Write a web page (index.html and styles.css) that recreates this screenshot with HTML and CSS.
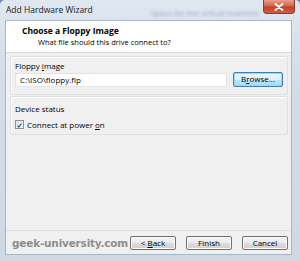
FILE: index.html
```html
<!DOCTYPE html>
<html>
<head>
<meta charset="utf-8">
<link rel="stylesheet" href="styles.css">
</head>
<body>
<div class="window">
  <div class="titlebar">
    <span class="title">Add Hardware Wizard</span>
    <span class="behind">Specs for the virtual machine</span>
    <span class="close"><svg width="10" height="8" viewBox="0 0 10 8"><path d="M1.5 1 L8.5 7 M8.5 1 L1.5 7" stroke="#fff" stroke-width="1.8" stroke-linecap="round"/></svg></span>
  </div>
  <div class="client">
    <div class="header">
      <div class="h-title">Choose a Floppy Image</div>
      <div class="h-sub">What file should this drive connect to?</div>
    </div>
    <div class="body">
      <div class="group">
        <div class="label">Floppy <u>i</u>mage</div>
        <div class="row">
          <div class="textbox">C:\ISO\floppy.flp</div>
          <div class="btn btn-focus">B<u>r</u>owse...</div>
        </div>
      </div>
      <div class="group group2">
        <div class="label">Device status</div>
        <div class="check-row">
          <span class="checkbox"><svg width="9" height="9" viewBox="0 0 9 9"><path d="M2 4.6 L3.8 6.6 L7 2" fill="none" stroke="#2a4a8a" stroke-width="1.3"/></svg></span>
          <span>Connect at power <u>o</u>n</span>
        </div>
      </div>
    </div>
    <div class="footer">
      <span class="watermark">geek-university.com</span>
      <div class="buttons">
        <div class="btn">&lt; <u>B</u>ack</div>
        <div class="btn">Finish</div>
        <div class="btn">Cancel</div>
      </div>
    </div>
  </div>
</div>
</body>
</html>
```
FILE: styles.css
```css
html, body {
  margin: 0;
  padding: 0;
  background: #6f8fb5;
}
.window {
  width: 300px;
  height: 261px;
  box-sizing: border-box;
  display: flex;
  flex-direction: column;
  background: linear-gradient(180deg, #dfe7f0 0%, #d3dde8 30%, #cfd9e4 100%);
  border-radius: 5px 5px 0 0;
  font-family: "Open Sans", "Noto Sans", sans-serif;
  font-size: 8px;
  color: #000;
  overflow: hidden;
}
.titlebar {
  height: 20px;
  flex: none;
  display: flex;
  align-items: flex-start;
  padding-left: 6px;
}
.title {
  font-size: 8.5px;
  line-height: 20px;
  color: #1a1a1a;
}
.behind {
  margin-left: auto;
  margin-right: 4px;
  margin-top: 7px;
  font-size: 8px;
  color: rgba(70, 110, 160, 0.5);
  filter: blur(1.4px);
  white-space: nowrap;
}
.close {
  width: 32px;
  height: 14px;
  margin-right: 5px;
  box-sizing: border-box;
  border: 1px solid #8a3a2a;
  border-top: none;
  border-radius: 0 0 4px 4px;
  background: linear-gradient(180deg, #e8a08e 0%, #d4644a 45%, #bf4329 55%, #cf5e44 100%);
  display: flex;
  align-items: center;
  justify-content: center;
}
.client {
  flex: 1;
  margin: 0 8px 6px 5px;
  border: 1px solid #a9b6c4;
  background: #f0f0f0;
  display: flex;
  flex-direction: column;
}
.header {
  height: 32px;
  flex: none;
  background: #fff;
  border-bottom: 1px solid #d8d8d8;
  box-sizing: border-box;
  padding: 4px 0 0 16px;
}
.h-title {
  font-weight: bold;
  font-size: 8.5px;
  line-height: 12px;
}
.h-sub {
  padding-left: 16px;
  font-size: 7.5px;
  line-height: 11px;
}
.body {
  padding: 3px 3px 0 4px;
  display: flex;
  flex-direction: column;
  gap: 1px;
  flex: 1;
}
.group {
  border: 1px solid #e0e0e0;
  box-shadow: inset 1px 1px 0 #fff;
  border-radius: 2px;
  padding: 3px 4px 7px 4px;
}
.label {
  line-height: 12px;
}
.row {
  display: flex;
  gap: 6px;
  align-items: center;
}
.textbox {
  flex: 1;
  height: 14px;
  box-sizing: border-box;
  background: #fff;
  border: 1px solid #e2e3ea;
  padding-left: 4px;
  line-height: 12px;
}
.btn {
  height: 14px;
  box-sizing: border-box;
  border: 1px solid #707070;
  border-radius: 2px;
  background: linear-gradient(180deg, #f3f3f3 0%, #ebebeb 50%, #dddddd 50%, #cfcfcf 100%);
  text-align: center;
  line-height: 12px;
  box-shadow: inset 0 0 0 1px #fcfcfc;
}
.btn-focus {
  width: 50px;
  height: 15px;
  border-color: #3c7fb1;
  background: linear-gradient(180deg, #eaf6fd 0%, #d9f0fc 50%, #bee6fd 50%, #a7d9f5 100%);
  box-shadow: inset 0 0 0 1px #9ed7f0;
}
.group2 {
  padding-top: 6px;
  padding-bottom: 4px;
}
.check-row {
  display: flex;
  align-items: center;
  gap: 3px;
  margin-top: 4px;
  line-height: 11px;
}
.checkbox {
  width: 9px;
  height: 9px;
  box-sizing: border-box;
  border: 1px solid #8e8f8f;
  background: linear-gradient(135deg, #dbe4ee, #f6f8fa);
  display: flex;
}
.footer {
  height: 22px;
  flex: none;
  border-top: 1px solid #dfdfdf;
  display: flex;
  align-items: center;
  padding: 1px 3px 0 6px;
}
.watermark {
  font-family: "DejaVu Sans", sans-serif;
  font-weight: bold;
  font-size: 10.5px;
  color: #8d8d8d;
  letter-spacing: -0.2px;
}
.buttons {
  margin-left: auto;
  display: flex;
  gap: 10px;
}
.buttons .btn {
  width: 46px;
}
```
